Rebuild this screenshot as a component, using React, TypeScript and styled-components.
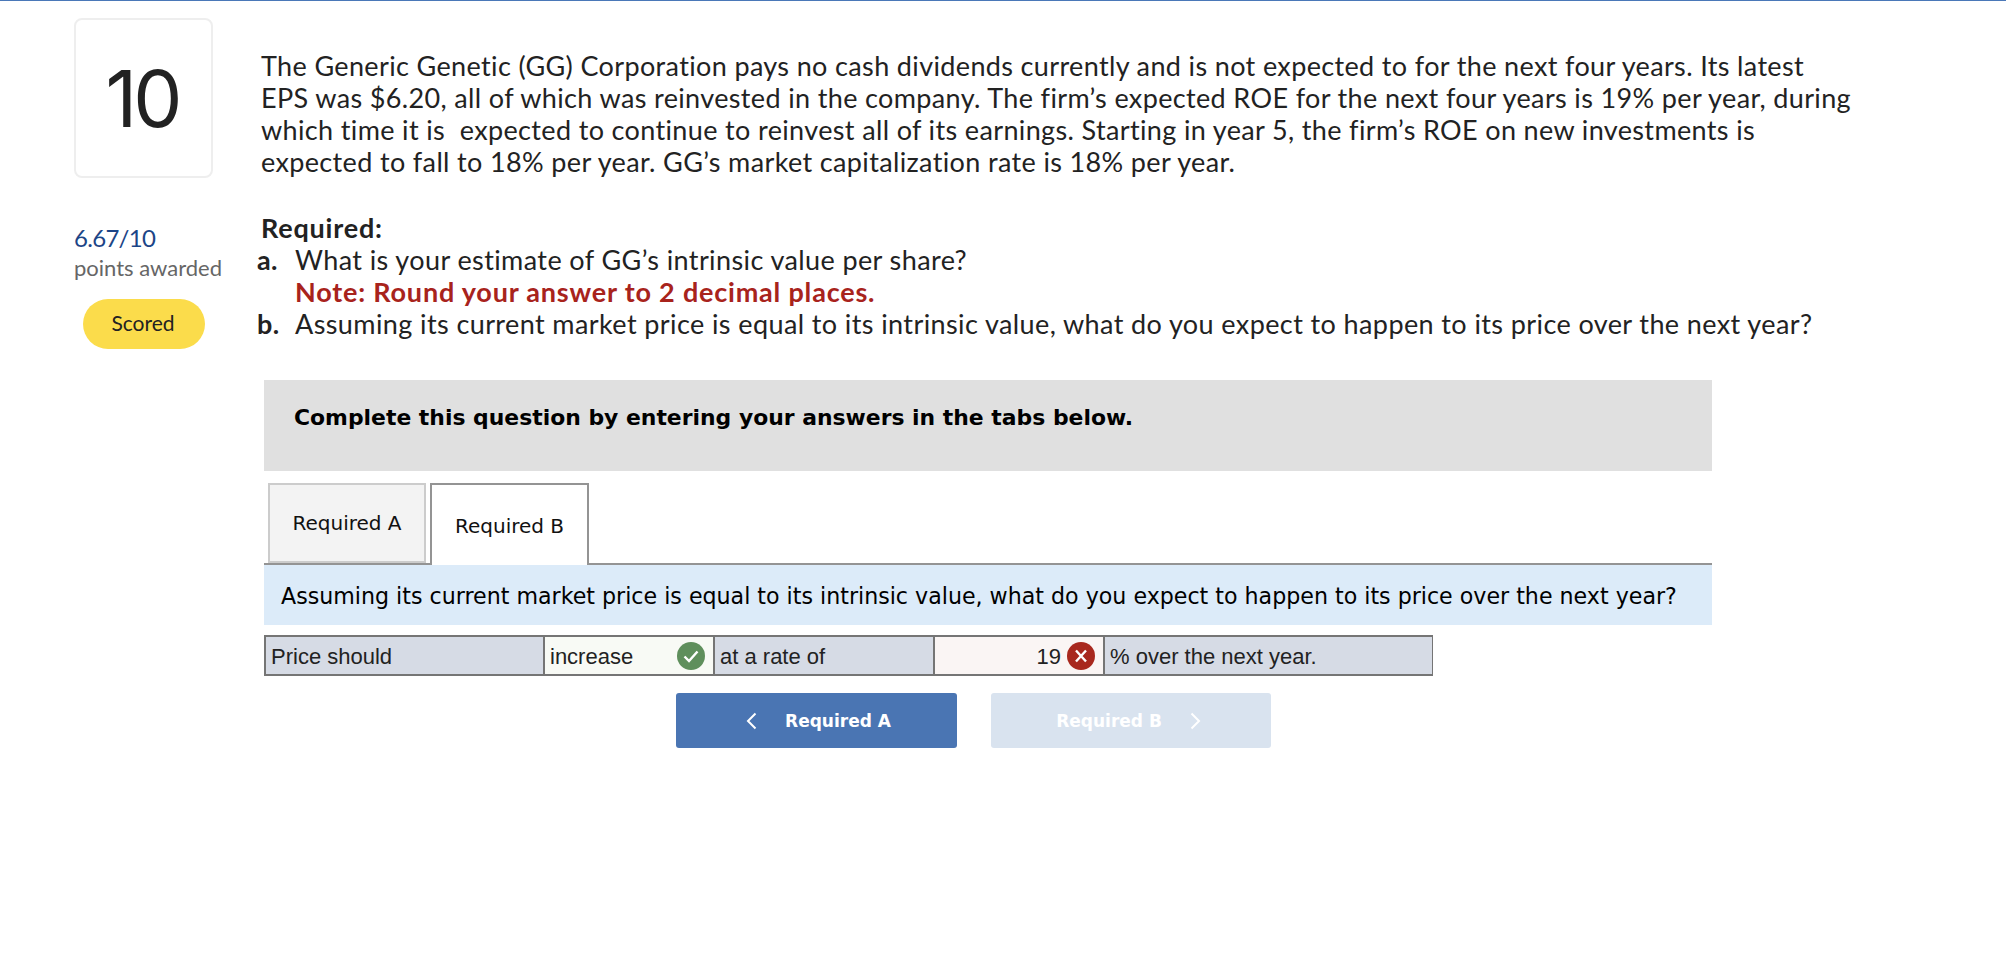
import React from "react";
import styled, { createGlobalStyle } from "styled-components";

const GlobalStyle = createGlobalStyle`
	html, body {
		background: #fff;
		margin: 0;
		padding: 0;
	}
`;

const Page = styled.div`
	border-top: 1px solid #4a78b8;
	box-sizing: border-box;
	color: #222;
	display: flex;
	font-family: "Lato", "Open Sans", sans-serif;
	height: 953px;
	padding-left: 74px;
	width: 2006px;
`;

const Sidebar = styled.aside`
	display: flex;
	flex-direction: column;
	padding-top: 17px;
	width: 187px;
`;

const NumberBox = styled.div`
	align-items: center;
	border: 2px solid #eee;
	border-radius: 8px;
	box-sizing: border-box;
	display: flex;
	font-family: "Inter", sans-serif;
	font-size: 78px;
	height: 160px;
	justify-content: center;
	letter-spacing: -4px;
	padding-right: 3px;
	width: 139px;
`;

const Score = styled.div`
	color: #1c4587;
	font-size: 24px;
	letter-spacing: -0.7px;
	line-height: 32px;
	margin-top: 44px;
`;

const ScoreLabel = styled.div`
	color: #666;
	font-size: 22px;
	line-height: 28px;
`;

const StatusPill = styled.div`
	align-items: center;
	background: #fbdc4b;
	border-radius: 25px;
	box-sizing: border-box;
	display: flex;
	font-size: 21px;
	height: 50px;
	justify-content: center;
	margin-left: 9px;
	margin-top: 17px;
	padding-bottom: 3px;
	padding-right: 2px;
	width: 122px;
`;

const Main = styled.main`
	display: flex;
	flex-direction: column;
	padding-top: 49px;
`;

const Paragraph = styled.p`
	font-size: 27px;
	letter-spacing: 0.36px;
	line-height: 32px;
	margin: 0 0 34px;
	white-space: nowrap;
`;

const Heading = styled.div`
	font-size: 27px;
	font-weight: 700;
	letter-spacing: 0.8px;
	line-height: 32px;
`;

const PartRow = styled.div`
	display: flex;
	font-size: 27px;
	letter-spacing: 0.4px;
	line-height: 32px;
	margin-left: -4px;
	white-space: nowrap;
`;

const PartMark = styled.span`
	font-weight: 700;
	width: 38px;
`;

const NoteLine = styled.div`
	color: #a8231c;
	font-size: 27px;
	font-weight: 700;
	letter-spacing: 0.8px;
	line-height: 32px;
	margin-left: 34px;
`;

const AnswerArea = styled.section`
	display: flex;
	flex-direction: column;
	margin-left: 3px;
	margin-top: 40px;
	width: 1448px;
`;

const Banner = styled.div`
	background: #e0e0e0;
	box-sizing: border-box;
	color: #000;
	font-family: "DejaVu Sans", Verdana, sans-serif;
	font-size: 21.9px;
	font-weight: 700;
	height: 91px;
	padding: 25px 30px 0;
`;

const TabRow = styled.div`
	border-bottom: 2px solid #949494;
	display: flex;
	gap: 5px;
	height: 80px;
	margin-top: 12px;
	padding-left: 4px;
`;

const Tab = styled.div<{ $active?: boolean }>`
	align-items: center;
	background: ${(p) => (p.$active ? "#fff" : "#f3f3f3")};
	border: 2px solid ${(p) => (p.$active ? "#949494" : "#ccc")};
	border-bottom: ${(p) => (p.$active ? "none" : "2px solid #ccc")};
	box-sizing: border-box;
	color: #111;
	display: flex;
	font-family: "DejaVu Sans", Verdana, sans-serif;
	font-size: 20px;
	height: ${(p) => (p.$active ? "82px" : "80px")};
	justify-content: center;
	margin-left: ${(p) => (p.$active ? "-1px" : "0")};
	padding-top: ${(p) => (p.$active ? "1px" : "0")};
	width: ${(p) => (p.$active ? "159px" : "158px")};
`;

const Prompt = styled.div`
	align-items: center;
	background: #dcebf9;
	box-sizing: border-box;
	color: #000;
	display: flex;
	font-family: "DejaVu Sans", Verdana, sans-serif;
	font-size: 22.15px;
	height: 60px;
	padding: 1px 0 0 17px;
`;

const AnswerRow = styled.div`
	background: #757575;
	box-sizing: border-box;
	display: grid;
	gap: 2px;
	grid-template-columns: 277px 168px 218px 168px 327px;
	height: 41px;
	margin-top: 10px;
	padding: 2px;
	width: 1169px;
`;

const Cell = styled.div<{ $tone?: "correct" | "wrong"; $right?: boolean }>`
	align-items: center;
	background: ${(p) =>
		p.$tone === "correct" ? "#f8faf5" : p.$tone === "wrong" ? "#faf5f4" : "#d6dbe5"};
	color: #222;
	display: flex;
	font-family: "Liberation Sans", Arial, sans-serif;
	font-size: 22px;
	gap: 6px;
	justify-content: ${(p) => (p.$right ? "flex-end" : "space-between")};
	line-height: 30px;
	padding: 0 8px 0 5px;
`;

const CellText = styled.span`
	position: relative;
	top: 1px;
`;

const NavRow = styled.div`
	display: flex;
	gap: 34px;
	margin-left: 412px;
	margin-top: 17px;
`;

const NavButton = styled.div<{ $disabled?: boolean }>`
	align-items: center;
	background: ${(p) => (p.$disabled ? "#d9e3ef" : "#4a75b3")};
	border-radius: 3px;
	box-sizing: border-box;
	color: #fff;
	display: flex;
	font-family: "DejaVu Sans", Verdana, sans-serif;
	font-size: 17px;
	font-weight: 700;
	gap: 28px;
	height: 55px;
	justify-content: center;
	padding: ${(p) => (p.$disabled ? "0 5px 0 0" : "0 0 0 4px")};
	width: ${(p) => (p.$disabled ? "280px" : "281px")};
`;

const CheckIcon = () => (
	<svg width="28" height="28" viewBox="0 0 28 28">
		<circle cx="14" cy="14" r="14" fill="#5f8f5c" />
		<path d="M7.5 14.5l4.5 4.5 8.5-9.5" fill="none" stroke="#fff" strokeWidth="2.4" />
	</svg>
);

const CrossIcon = () => (
	<svg width="28" height="28" viewBox="0 0 28 28">
		<circle cx="14" cy="14" r="14" fill="#a8281e" />
		<path d="M9 8.5l10 11M19 8.5l-10 11" fill="none" stroke="#fff" strokeWidth="2.4" />
	</svg>
);

const Chevron = ({ left }: { left?: boolean }) => (
	<svg width="11" height="18" viewBox="0 0 11 18">
		<path
			d={left ? "M9.5 1.5L2 9l7.5 7.5" : "M1.5 1.5L9 9l-7.5 7.5"}
			fill="none"
			stroke="#fff"
			strokeWidth="2"
		/>
	</svg>
);

export default function App() {
	return (
		<Page>
			<GlobalStyle />
			<Sidebar>
				<NumberBox>10</NumberBox>
				<Score>6.67/10</Score>
				<ScoreLabel>points awarded</ScoreLabel>
				<StatusPill>Scored</StatusPill>
			</Sidebar>
			<Main>
				<Paragraph>
					The Generic Genetic (GG) Corporation pays no cash dividends currently and is not expected to for the next four years. Its latest
					<br />
					EPS was $6.20, all of which was reinvested in the company. The firm’s expected ROE for the next four years is 19% per year, during
					<br />
					which time it is&nbsp; expected to continue to reinvest all of its earnings. Starting in year 5, the firm’s ROE on new investments is
					<br />
					expected to fall to 18% per year. GG’s market capitalization rate is 18% per year.
				</Paragraph>
				<Heading>Required:</Heading>
				<PartRow>
					<PartMark>a.</PartMark>
					What is your estimate of GG’s intrinsic value per share?
				</PartRow>
				<NoteLine>Note: Round your answer to 2 decimal places.</NoteLine>
				<PartRow>
					<PartMark>b.</PartMark>
					Assuming its current market price is equal to its intrinsic value, what do you expect to happen to its price over the next year?
				</PartRow>
				<AnswerArea>
					<Banner>Complete this question by entering your answers in the tabs below.</Banner>
					<TabRow>
						<Tab>Required A</Tab>
						<Tab $active>Required B</Tab>
					</TabRow>
					<Prompt>Assuming its current market price is equal to its intrinsic value, what do you expect to happen to its price over the next year?</Prompt>
					<AnswerRow>
						<Cell><CellText>Price should</CellText></Cell>
						<Cell $tone="correct">
							<CellText>increase</CellText>
							<CheckIcon />
						</Cell>
						<Cell><CellText>at a rate of</CellText></Cell>
						<Cell $tone="wrong" $right>
							<CellText>19</CellText>
							<CrossIcon />
						</Cell>
						<Cell><CellText>% over the next year.</CellText></Cell>
					</AnswerRow>
					<NavRow>
						<NavButton>
							<Chevron left />
							Required A
						</NavButton>
						<NavButton $disabled>
							Required B
							<Chevron />
						</NavButton>
					</NavRow>
				</AnswerArea>
			</Main>
		</Page>
	);
}
